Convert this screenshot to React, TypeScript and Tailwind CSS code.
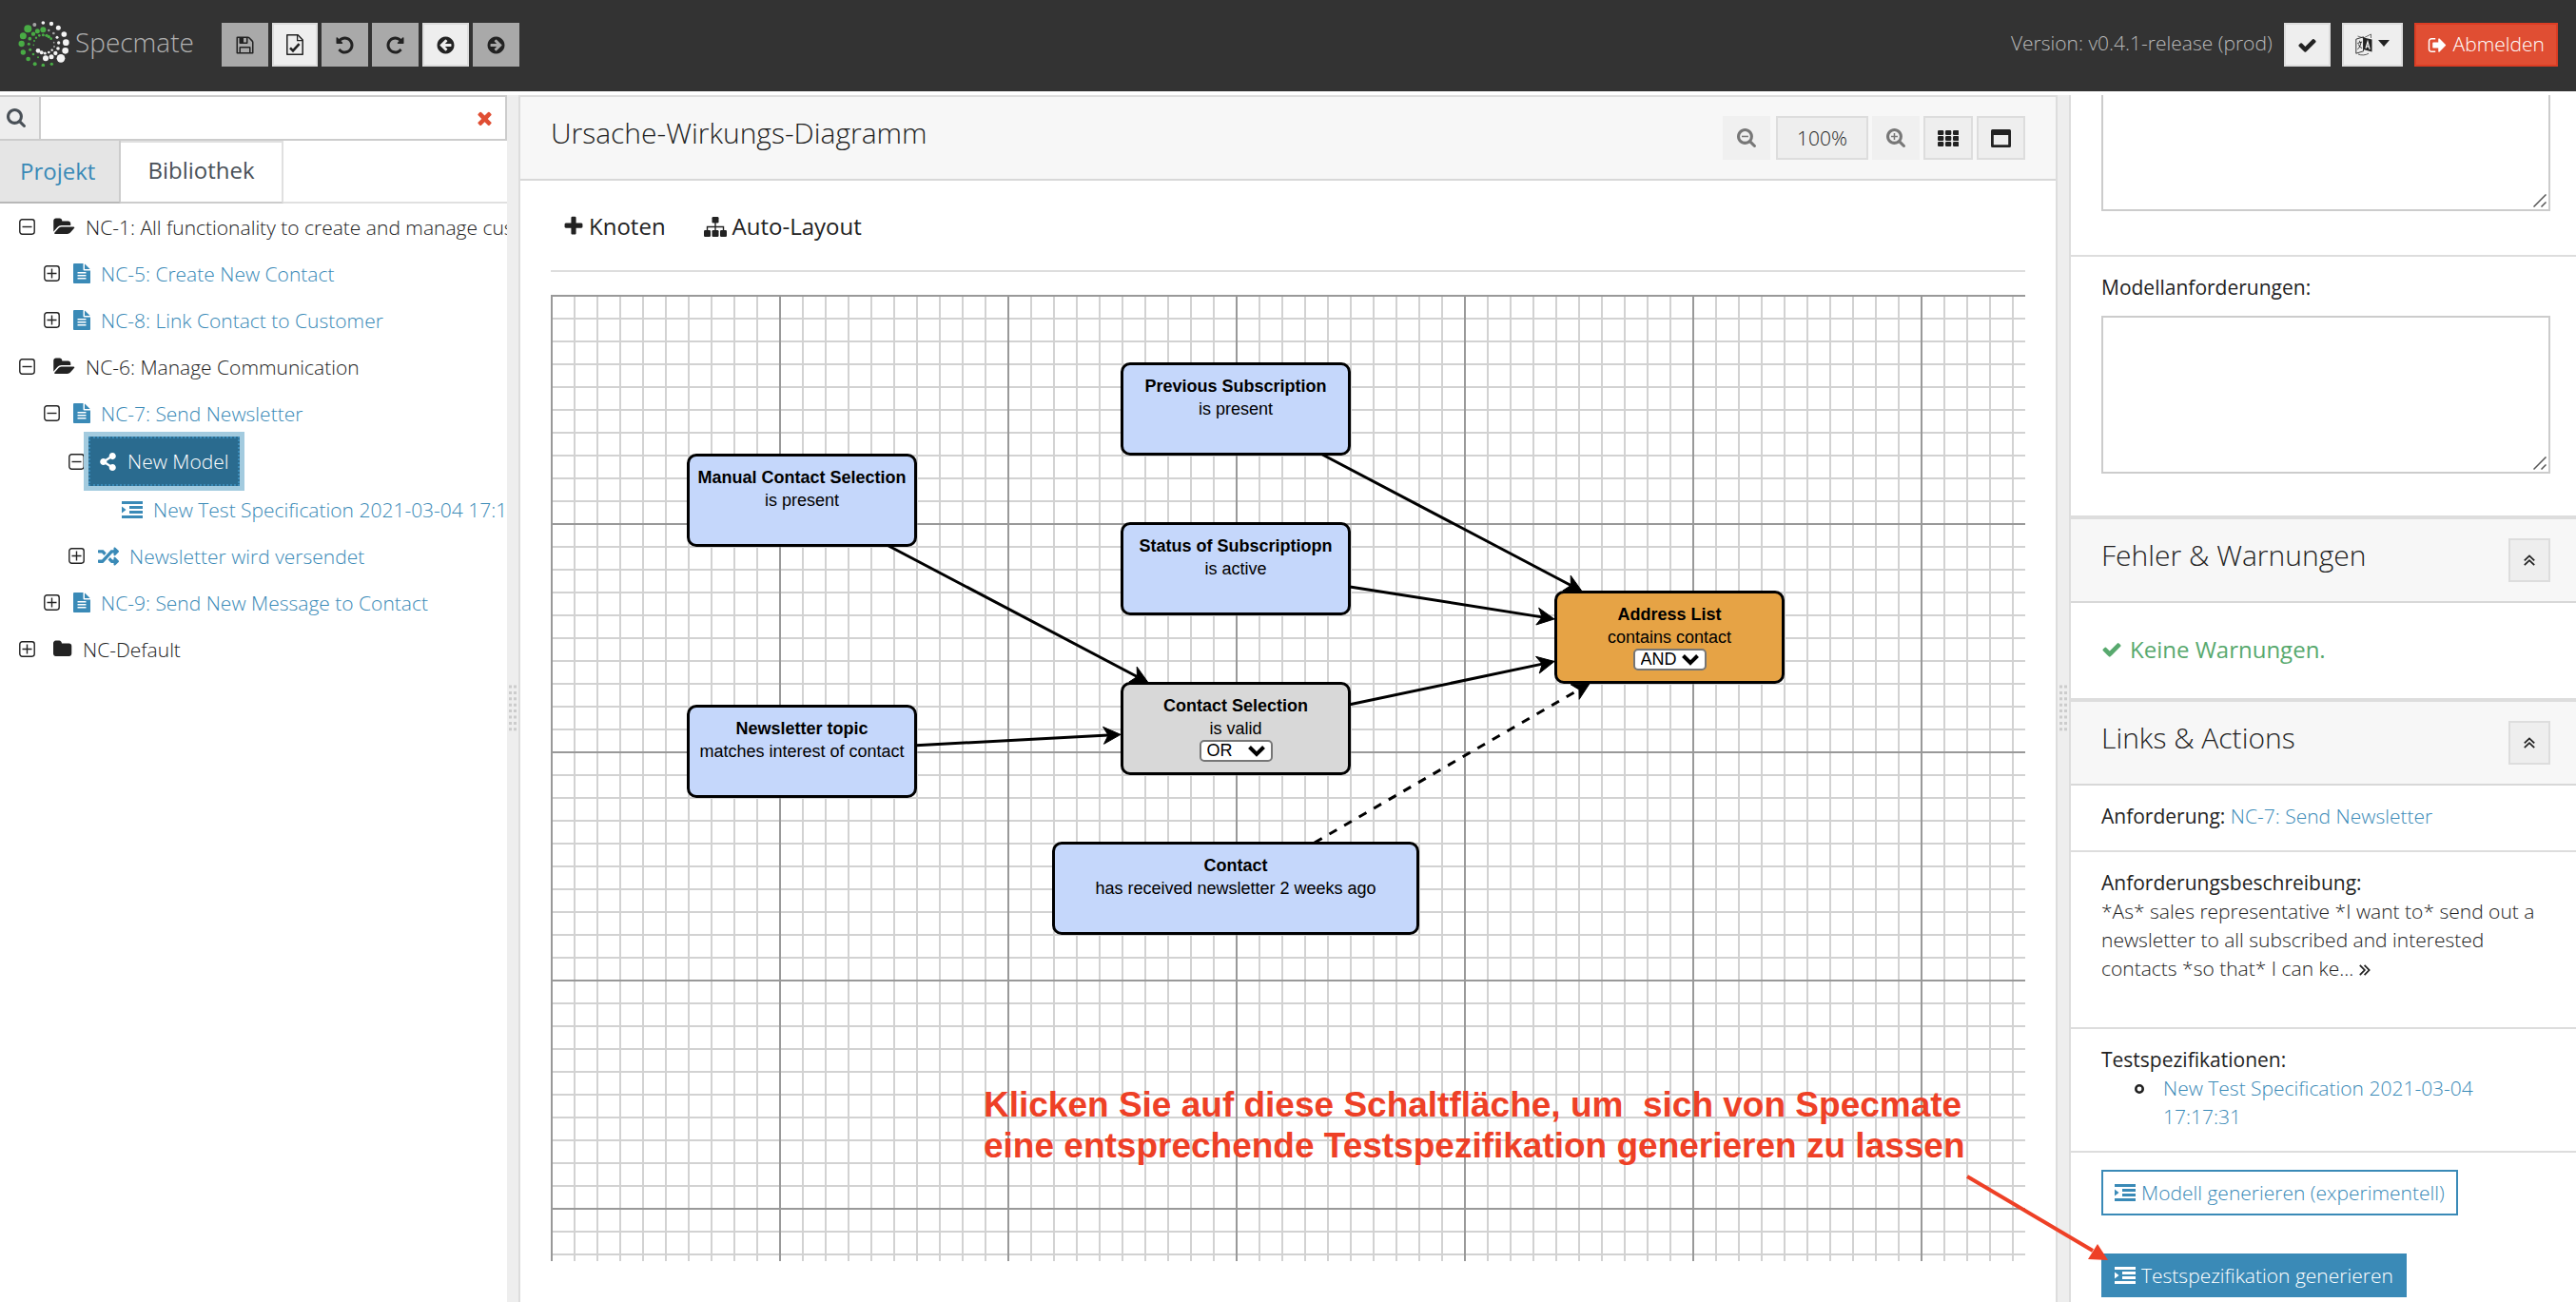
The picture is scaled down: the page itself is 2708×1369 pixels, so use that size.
import { useState } from 'react';
import type { ReactNode } from 'react';
import { FaRandom, FaShareAlt } from 'react-icons/fa';

/* ---------- Icons ---------- */

const paths = {
  save: 'M512 1536h768v-384h-768v384zm896 0h128v-896q0-14-10-38.5t-20-34.5l-281-281q-10-10-34-20t-39-10v416q0 40-28 68t-68 28h-576q-40 0-68-28t-28-68v-416h-128v1280h128v-416q0-40 28-68t68-28h832q40 0 68 28t28 68v416zm-384-928v-320q0-13-9.5-22.5t-22.5-9.5h-192q-13 0-22.5 9.5t-9.5 22.5v320q0 13 9.5 22.5t22.5 9.5h192q13 0 22.5-9.5t9.5-22.5zm640 32v928q0 40-28 68t-68 28h-1344q-40 0-68-28t-28-68v-1344q0-40 28-68t68-28h928q40 0 88 20t76 48l280 280q28 28 48 76t20 88z',
  undo: 'M1664 896q0 156-61 298t-164 245-245 164-298 61q-172 0-327-72.5t-264-204.5q-7-10-6.5-22.5t8.5-20.5l137-138q10-9 25-9 16 2 23 12 73 95 179 147t225 52q104 0 198.5-40.5t163.5-109.5 109.5-163.5 40.5-198.5-40.5-198.5-109.5-163.5-163.5-109.5-198.5-40.5q-98 0-188 35.5t-160 101.5l137 138q31 30 14 69-17 40-59 40h-448q-26 0-45-19t-19-45v-448q0-42 40-59 39-17 69 14l130 129q107-101 244.5-156.5t284.5-55.5q156 0 298 61t245 164 164 245 61 298z',
  back: 'M1408 960v-128q0-26-19-45t-45-19h-502l189-189q19-19 19-45t-19-45l-91-91q-18-18-45-18t-45 18l-362 362-91 91q-18 18-18 45t18 45l91 91 362 362q18 18 45 18t45-18l91-91q18-18 18-45t-18-45l-189-189h502q26 0 45-19t19-45zm256-64q0 209-103 385.5t-279.5 279.5-385.5 103-385.5-103-279.5-279.5-103-385.5 103-385.5 279.5-279.5 385.5-103 385.5 103 279.5 279.5 103 385.5z',
  search: 'M1216 832q0-185-131.5-316.5t-316.5-131.5-316.5 131.5-131.5 316.5 131.5 316.5 316.5 131.5 316.5-131.5 131.5-316.5zm512 832q0 52-38 90t-90 38q-54 0-90-38l-343-342q-179 124-399 124-143 0-273.5-55.5t-225-150-150-225-55.5-273.5 55.5-273.5 150-225 225-150 273.5-55.5 273.5 55.5 225 150 150 225 55.5 273.5q0 220-124 399l343 343q37 37 37 90z',
  times: 'M1490 1322q0 40-28 68l-136 136q-28 28-68 28t-68-28l-294-294-294 294q-28 28-68 28t-68-28l-136-136q-28-28-28-68t28-68l294-294-294-294q-28-28-28-68t28-68l136-136q28-28 68-28t68 28l294 294 294-294q28-28 68-28t68 28l136 136q28 28 28 68t-28 68l-294 294 294 294q28 28 28 68z',
  check: 'M1671 566q0 40-28 68l-724 724-136 136q-28 28-68 28t-68-28l-136-136-362-362q-28-28-28-68t28-68l136-136q28-28 68-28t68 28l294 295 656-657q28-28 68-28t68 28l136 136q28 28 28 68z',
  plus: 'M1600 736v192q0 40-28 68t-68 28h-416v416q0 40-28 68t-68 28h-192q-40 0-68-28t-28-68v-416h-416q-40 0-68-28t-28-68v-192q0-40 28-68t68-28h416v-416q0-40 28-68t68-28h192q40 0 68 28t28 68v416h416q40 0 68 28t28 68z',
  signOut: 'M704 1440q0 4 1 20t.5 26.5-3 23.5-10 19.5-20.5 6.5h-320q-119 0-203.5-84.5t-84.5-203.5v-704q0-119 84.5-203.5t203.5-84.5h320q13 0 22.5 9.5t9.5 22.5q0 4 1 20t.5 26.5-3 23.5-10 19.5-20.5 6.5h-320q-66 0-113 47t-47 113v704q0 66 47 113t113 47h312l11.5 1 11.5 3 8 5.5 7 9 2 13.5zm928-544q0 26-19 45l-544 544q-19 19-45 19t-45-19-19-45v-288h-448q-26 0-45-19t-19-45v-384q0-26 19-45t45-19h448v-288q0-26 19-45t45-19 45 19l544 544q19 19 19 45z',
  folder: 'M1728 608v704q0 92-66 158t-158 66h-1216q-92 0-158-66t-66-158v-960q0-92 66-158t158-66h320q92 0 158 66t66 158v32h672q92 0 158 66t66 158z',
  folderOpen: 'M1879 952q0 31-31 66l-336 396q-43 51-120.5 86.5t-143.5 35.5h-1088q-34 0-60.5-13t-26.5-43q0-31 31-66l336-396q43-51 120.5-86.5t143.5-35.5h1088q34 0 60.5 13t26.5 43zm-343-344v160h-832q-94 0-197 47.5t-164 119.5l-337 396-5 6q0-4-.5-12.5t-.5-12.5v-960q0-92 66-158t158-66h320q92 0 158 66t66 158v32h544q92 0 158 66t66 158z',
  file: 'M1596 476q14 14 28 36h-472v-472q22 14 36 28zm-476 164h544v1056q0 40-28 68t-68 28h-1344q-40 0-68-28t-28-68v-1600q0-40 28-68t68-28h800v544q0 40 28 68t68 28zm160 736v-64q0-14-9-23t-23-9h-704q-14 0-23 9t-9 23v64q0 14 9 23t23 9h704q14 0 23-9t9-23zm0-256v-64q0-14-9-23t-23-9h-704q-14 0-23 9t-9 23v64q0 14 9 23t23 9h704q14 0 23-9t9-23zm0-256v-64q0-14-9-23t-23-9h-704q-14 0-23 9t-9 23v64q0 14 9 23t23 9h704q14 0 23-9t9-23z',
};

function Glyph({ name, className = '', box = '0 0 1792 1792' }: { name: keyof typeof paths; className?: string; box?: string }) {
  return (
    <svg aria-hidden="true" viewBox={box} fill="currentColor" className={`shrink-0 ${className}`}>
      <path d={paths[name]} />
    </svg>
  );
}

function FileCheckIcon() {
  return (
    <svg aria-hidden="true" viewBox="0 0 20 24" fill="none" stroke="currentColor" className="h-6 w-5">
      <path d="M1.8 1.8h11.4l5 5.2v15.2H1.8z" strokeWidth="1.5" strokeLinejoin="round" />
      <path d="M12.6 2v5.6h5.4" strokeWidth="1.3" />
      <path d="M5 15.4l3 3 6.600-7.200" strokeWidth="2.6" />
    </svg>
  );
}

function LanguageIcon() {
  return (
    <svg aria-hidden="true" viewBox="0 0 18 24" className="h-6 w-[18px]" fill="none" stroke="currentColor">
      <path d="M.8 6.200L8.500 3.800v15L.8 21.200z" strokeWidth="0.9" />
      <path d="M2.500 3l6 2 8-4v4" strokeWidth="0.8" opacity="0.8" />
      <path d="M8.500 4.500l9 2v13l-9-2.500z" fill="currentColor" stroke="none" />
      <path d="M11 15.800l2-7 2.200 8M11.600 13.600l3 .8" stroke="#ededed" strokeWidth="1.300" />
      <path d="M2.300 10.500l4.800-1.500M4.500 7.800l.4 1.800M6 9.500c-.6 3.500-2 6-3.600 7.400M3.300 11.500c.8 2 2 3.600 3.800 4" strokeWidth="0.9" />
      <path d="M3 22c3 1.400 8 1.200 11-.8" strokeWidth="0.9" opacity="0.8" />
    </svg>
  );
}

function ToggleIcon({ open }: { open: boolean }) {
  return (
    <svg aria-hidden="true" viewBox="0 0 17 17" className="size-[17px] shrink-0" fill="none" stroke="currentColor" strokeWidth="1.400">
      <rect x="0.8" y="0.8" width="15.400" height="15.400" rx="2.600" />
      <path d={open ? 'M3.500 8.500h10' : 'M3.500 8.500h10M8.500 3.500v10'} />
    </svg>
  );
}

function IndentIcon() {
  return (
    <svg aria-hidden="true" viewBox="0 0 22 18" fill="currentColor" className="h-[18px] w-[22px] shrink-0">
      <path d="M0 0h22v3H0zM8 5h14v3H8zM8 10h14v3H8zM0 15h22v3H0zM0 5.500L4.500 9 0 12.500z" />
    </svg>
  );
}

function ZoomIcon({ plus }: { plus?: boolean }) {
  return (
    <svg aria-hidden="true" viewBox="64 128 1664 1664" fill="currentColor" className="size-5 shrink-0">
      <path d={paths.search} />
      <path d={plus ? 'M480 768h576v128h-576zM704 544h128v576h-128z' : 'M480 768h576v128h-576z'} />
    </svg>
  );
}

function GridIcon() {
  return (
    <svg aria-hidden="true" viewBox="0 0 22 17" fill="currentColor" className="h-[17px] w-[22px]">
      {[0, 6, 12].map((y) => [0, 8, 16].map((x) => <rect key={`${x}-${y}`} x={x} y={y} width="6.300" height="5" rx="1.300" />))}
    </svg>
  );
}

function WindowIcon() {
  return (
    <svg aria-hidden="true" viewBox="0 0 21 19" fill="currentColor" className="h-[19px] w-[21px]">
      <path fillRule="evenodd" d="M1.500 0h18Q21 0 21 1.500v16Q21 19 19.500 19h-18Q0 19 0 17.500v-16Q0 0 1.500 0zM2.800 6v10.300h15.400V6z" />
    </svg>
  );
}

function SitemapIcon() {
  return (
    <svg aria-hidden="true" viewBox="0 0 24 21" fill="currentColor" className="h-[21px] w-6">
      <rect x="8.500" y="0" width="7" height="6.500" rx="1.200" />
      <rect x="0" y="14" width="7" height="7" rx="1.200" />
      <rect x="8.500" y="14" width="7" height="7" rx="1.200" />
      <rect x="17" y="14" width="7" height="7" rx="1.200" />
      <path d="M12 6v9M3.500 15v-4.500h17V15" fill="none" stroke="currentColor" strokeWidth="1.400" />
    </svg>
  );
}

function DoubleUpIcon() {
  return (
    <svg aria-hidden="true" viewBox="0 0 12 12" fill="none" stroke="currentColor" strokeWidth="1.800" className="size-3">
      <path d="M.8 6.400L6 1.400l5.200 5M.8 11.200L6 6.200l5.200 5" />
    </svg>
  );
}

const green: number[][] = [
  [56, 60, 12], [41, 82, 10.5], [36, 107, 9.5], [41, 134, 8], [57, 155, 7], [78, 171, 6], [104, 175, 5.5], [131, 171, 5],
  [104, 63, 9], [86, 67, 7.5], [73, 76, 6.5], [62, 91, 5.5], [59, 108, 4.5], [63, 126, 4.5], [73, 140, 4], [88, 150, 3],
  [82, 88, 3.5], [92, 81, 4], [104, 79, 4.5], [115, 81, 5], [122, 85, 5], [129, 91, 4], [76, 98, 3], [74, 111, 2.5],
];
const white: number[][] = [
  [104, 41, 5.5], [130, 44, 6.5], [152, 57, 7.5], [170, 77, 8.5], [176, 103, 10], [174, 129, 10], [160, 153, 13],
  [148, 87, 4.5], [153, 104, 5], [151, 122, 5.5], [143, 137, 6.5], [130, 148, 7.5], [112, 153, 9],
  [88, 129, 7], [99, 135, 6], [110, 137, 4.5], [122, 134, 4], [132, 127, 3.5],
];
const grey: number[][] = [[77, 47, 6], [122, 65, 3.5], [137, 74, 4], [139, 116, 3], [138, 103, 2.5]];

function Logo() {
  const dots = (list: number[][], className: string) =>
    list.map(([x, y, r]) => <circle key={`${x}-${y}`} cx={x} cy={y} r={r} className={className} />);
  return (
    <a href="#" className="flex items-center gap-1.5">
      <svg aria-hidden="true" viewBox="25 35 162 144" className="h-12 w-[54px]">
        {dots(green, 'fill-[#49ac45]')}
        {dots(white, 'fill-[#f4f4f4]')}
        {dots(grey, 'fill-[#a5a5a5]')}
      </svg>
      <span className="pb-1 text-[28px] leading-9 text-[#b0b0b0]">Specmate</span>
    </a>
  );
}

/* ---------- Header ---------- */

function HeaderButton({ label, active, children }: { label: string; active?: boolean; children: ReactNode }) {
  return (
    <button
      type="button"
      aria-label={label}
      disabled={!active}
      className={`flex h-[46px] min-w-12 items-center justify-center border-2 px-3 text-[#222] ${
        active ? 'border-[#ddd] bg-[#eee]' : 'border-[#a9a9a9] bg-[#a9a9a9]'
      }`}
    >
      {children}
    </button>
  );
}

function Header() {
  return (
    <header className="flex h-24 shrink-0 items-start bg-[#333] px-[19px]">
      <div className="flex h-[92px] items-center gap-[29px]">
        <Logo />
        <div className="flex items-center gap-1 pt-0.5">
          <HeaderButton label="Speichern"><Glyph name="save" className="size-[21px]" /></HeaderButton>
          <HeaderButton label="Prüfen" active><FileCheckIcon /></HeaderButton>
          <HeaderButton label="Rückgängig"><Glyph name="undo" className="size-[21px]" /></HeaderButton>
          <HeaderButton label="Wiederholen"><Glyph name="undo" className="size-[21px] -scale-x-100" /></HeaderButton>
          <HeaderButton label="Zurück" active><Glyph name="back" className="size-[21px]" /></HeaderButton>
          <HeaderButton label="Vorwärts"><Glyph name="back" className="size-[21px] -scale-x-100" /></HeaderButton>
        </div>
      </div>
      <div className="ml-auto flex items-center gap-3 pt-6">
        <span className="pb-1 text-[#b9b9b9]">Version: v0.4.1-release (prod)</span>
        <HeaderButton label="Status" active><Glyph name="check" className="size-[21px]" /></HeaderButton>
        <HeaderButton label="Sprache" active>
          <span className="flex items-center gap-1.5">
            <LanguageIcon />
            <svg aria-hidden="true" viewBox="0 0 12 7" className="-mt-1 h-[7px] w-3" fill="currentColor"><path d="M0 0h12L6 7z" /></svg>
          </span>
        </HeaderButton>
        <button type="button" className="flex h-[46px] items-center gap-1.5 border-2 border-[#dc3d24] bg-[#e04e33] px-3 font-normal text-white">
          <Glyph name="signOut" className="size-[21px]" />
          <span className="pb-0.5 font-light">Abmelden</span>
        </button>
      </div>
    </header>
  );
}

/* ---------- Project explorer ---------- */

type Row = { label: string; level: string; open?: boolean; icon: ReactNode; link?: boolean; selected?: boolean };

const rows: Row[] = [
  { label: 'NC-1: All functionality to create and manage customers', level: 'pl-5', open: true, icon: <Glyph name="folderOpen" box="0 0 1920 1792" className="h-[21px] w-[23px]" /> },
  { label: 'NC-5: Create New Contact', level: 'pl-[46px]', open: false, link: true, icon: <Glyph name="file" box="128 0 1536 1792" className="h-[21px] w-[18px]" /> },
  { label: 'NC-8: Link Contact to Customer', level: 'pl-[46px]', open: false, link: true, icon: <Glyph name="file" box="128 0 1536 1792" className="h-[21px] w-[18px]" /> },
  { label: 'NC-6: Manage Communication', level: 'pl-5', open: true, icon: <Glyph name="folderOpen" box="0 0 1920 1792" className="h-[21px] w-[23px]" /> },
  { label: 'NC-7: Send Newsletter', level: 'pl-[46px]', open: true, link: true, icon: <Glyph name="file" box="128 0 1536 1792" className="h-[21px] w-[18px]" /> },
  { label: 'New Model', level: 'pl-[72px]', open: true, selected: true, icon: <FaShareAlt className="size-[19px]" /> },
  { label: 'New Test Specification 2021-03-04 17:17:31', level: 'pl-32', link: true, icon: <IndentIcon /> },
  { label: 'Newsletter wird versendet', level: 'pl-[72px]', open: false, link: true, icon: <FaRandom className="size-[22px]" /> },
  { label: 'NC-9: Send New Message to Contact', level: 'pl-[46px]', open: false, link: true, icon: <Glyph name="file" box="128 0 1536 1792" className="h-[21px] w-[18px]" /> },
  { label: 'NC-Default', level: 'pl-5', open: false, icon: <Glyph name="folder" box="64 0 1728 1792" className="h-[21px] w-5" /> },
];

function TreeRow({ row }: { row: Row }) {
  return (
    <li className={`flex items-center ${row.level} ${row.selected ? 'h-[52px] gap-1' : row.link ? 'h-[49px] gap-3.5' : 'h-[49px] gap-[19px]'}`}>
      {row.open !== undefined && (
        <button type="button" aria-label={row.open ? 'Zuklappen' : 'Aufklappen'} aria-expanded={row.open}>
          <ToggleIcon open={row.open} />
        </button>
      )}
      {row.selected ? (
        <a href="#" className="flex h-full items-center gap-[11px] border-2 border-dotted border-[#3a8ab7] bg-[#2a6b8f] px-[9px] whitespace-nowrap text-white ring-5 ring-[#a3cbdf]">
          {row.icon}
          {row.label}
        </a>
      ) : (
        <a href="#" className={`flex items-center gap-[11px] whitespace-nowrap ${row.link ? 'text-[#3a8ab7]' : 'text-[#222]'}`}>
          {row.icon}
          {row.label}
        </a>
      )}
    </li>
  );
}

function Explorer() {
  return (
    <aside className="flex w-[533px] shrink-0 flex-col overflow-hidden">
      <div className="flex h-12 shrink-0 border-2 border-l-0 border-[#ccc]">
        <span className="flex w-[43px] items-center border-r-2 border-[#ccc] bg-[#eee] pl-[7px] text-[#495057]">
          <Glyph name="search" box="64 128 1664 1664" className="size-5" />
        </span>
        <input type="text" aria-label="Suche" className="min-w-0 flex-1 px-3 outline-none" />
        <button type="button" aria-label="Suche löschen" className="px-3.5 text-[#e04e33]">
          <Glyph name="times" box="302 302 1188 1252" className="size-[15px]" />
        </button>
      </div>
      <div role="tablist" className="flex h-[66px] shrink-0 border-b-2 border-[#e0e0e0] text-[24px] font-normal">
        <button type="button" role="tab" aria-selected="false" className="-mb-0.5 border-r-2 border-b-2 border-r-[#ccc] border-b-[#b8b8b8] bg-[#e5e5e5] pr-[25px] pl-[21px] text-[#3a8ab7]">Projekt</button>
        <button type="button" role="tab" aria-selected="true" className="-mb-0.5 border-2 border-l-0 border-[#e0e0e0] border-b-[#ccc] px-7 pb-1 text-[#495057]">Bibliothek</button>
      </div>
      <ul>
        {rows.map((row) => <TreeRow key={row.label} row={row} />)}
      </ul>
    </aside>
  );
}

function Splitter() {
  return (
    <div role="separator" className="flex w-3 shrink-0 items-center justify-center bg-[#eee]">
      <svg aria-hidden="true" viewBox="0 0 8 50" className="mt-5 h-[50px] w-2 fill-[#ccc]">
        {[0, 1, 2, 3, 4, 5, 6, 7].map((i) => (
          <path key={i} d={`M0 ${i * 6.4 + 0.500}h3v3h-3zM5 ${i * 6.4 + 0.500}h3v3h-3z`} />
        ))}
      </svg>
    </div>
  );
}

/* ---------- Cause-effect diagram ---------- */

type DiagramNode = { id: string; title: string; text: string; x: number; y: number; w: number; color: string; op?: string };

const nodes: DiagramNode[] = [
  { id: 'manual', title: 'Manual Contact Selection', text: 'is present', x: 144, y: 168, w: 240, color: 'bg-[#c5d7fb]' },
  { id: 'topic', title: 'Newsletter topic', text: 'matches interest of contact', x: 144, y: 432, w: 240, color: 'bg-[#c5d7fb]' },
  { id: 'previous', title: 'Previous Subscription', text: 'is present', x: 600, y: 72, w: 240, color: 'bg-[#c5d7fb]' },
  { id: 'status', title: 'Status of Subscriptiopn', text: 'is active', x: 600, y: 240, w: 240, color: 'bg-[#c5d7fb]' },
  { id: 'selection', title: 'Contact Selection', text: 'is valid', x: 600, y: 408, w: 240, color: 'bg-[#d8d8d8]', op: 'OR' },
  { id: 'address', title: 'Address List', text: 'contains contact', x: 1056, y: 312, w: 240, color: 'bg-[#e6a345]', op: 'AND' },
  { id: 'contact', title: 'Contact', text: 'has received newsletter 2 weeks ago', x: 528, y: 576, w: 384, color: 'bg-[#c5d7fb]' },
];

const edges = [
  { from: 'manual', to: 'selection' },
  { from: 'topic', to: 'selection' },
  { from: 'previous', to: 'address' },
  { from: 'status', to: 'address' },
  { from: 'selection', to: 'address' },
  { from: 'contact', to: 'address', dashed: true },
];

const NODE_HEIGHT = 96;

/** Point where the line from the centre of `a` towards the centre of `b` leaves `a`. */
function exitPoint(a: DiagramNode, b: DiagramNode) {
  const cx = a.x + a.w / 2;
  const cy = a.y + NODE_HEIGHT / 2;
  const dx = b.x + b.w / 2 - cx;
  const dy = b.y + NODE_HEIGHT / 2 - cy;
  const t = Math.min(a.w / 2 / Math.abs(dx || 1e-9), NODE_HEIGHT / 2 / Math.abs(dy || 1e-9));
  return { x: cx + dx * t, y: cy + dy * t };
}

function Edge({ from, to, dashed }: { from: string; to: string; dashed?: boolean }) {
  const a = nodes.find((n) => n.id === from)!;
  const b = nodes.find((n) => n.id === to)!;
  const start = exitPoint(a, b);
  const end = exitPoint(b, a);
  const length = Math.hypot(end.x - start.x, end.y - start.y);
  const ux = (end.x - start.x) / length;
  const uy = (end.y - start.y) / length;
  const at = (back: number, side: number) => `${end.x - ux * back - uy * side},${end.y - uy * back + ux * side}`;
  return (
    <g>
      <path d={`M${start.x},${start.y}L${at(14, 0)}`} fill="none" stroke="#000" strokeWidth="3" strokeDasharray={dashed ? '9 9' : undefined} />
      <path d={`M${at(1, 0)}L${at(19, 9)}L${at(14, 0)}L${at(19, -9)}Z`} stroke="#000" strokeWidth="1" />
    </g>
  );
}

function Diagram() {
  const [ops, setOps] = useState<Record<string, string>>({ selection: 'OR', address: 'AND' });
  return (
    <div className="relative flex-1 overflow-hidden font-[Liberation_Sans,Arial,sans-serif] text-black">
      <svg aria-hidden="true" className="absolute inset-0 size-full">
        <defs>
          <pattern id="minor" width="24" height="24" patternUnits="userSpaceOnUse">
            <path d="M0 1h24M1 0v24" stroke="#d2d2d2" strokeWidth="2" />
          </pattern>
          <pattern id="major" width="240" height="240" patternUnits="userSpaceOnUse">
            <path d="M0 1h240M1 0v240" stroke="#999" strokeWidth="2" />
          </pattern>
        </defs>
        <rect width="100%" height="100%" fill="url(#minor)" />
        <rect width="100%" height="100%" fill="url(#major)" />
        {edges.map((e) => <Edge key={`${e.from}-${e.to}`} {...e} />)}
      </svg>
      {nodes.map((n) => (
        <div
          key={n.id}
          className={`absolute flex h-[98px] flex-col items-center rounded-[10px] border-3 border-black pt-2.5 text-[18px] leading-6 whitespace-nowrap ${n.color}`}
          style={{ left: n.x - 1, top: n.y - 1, width: n.w + 2 }}
        >
          <div className="font-bold">{n.title}</div>
          <div className="font-normal">{n.text}</div>
          {n.op && (
            <div className="relative">
              <select
                aria-label={`Operator ${n.title}`}
                value={ops[n.id]}
                onChange={(e) => setOps({ ...ops, [n.id]: e.target.value })}
                className="block h-[23px] w-[77px] appearance-none rounded-[5px] border-2 border-[#767676] bg-white pl-1.5 text-[18px] leading-[19px] font-normal"
              >
                <option>AND</option>
                <option>OR</option>
              </select>
              <svg aria-hidden="true" viewBox="0 0 18 12" className="pointer-events-none absolute top-1.5 right-2 h-3 w-[18px]" fill="none" stroke="#000" strokeWidth="4">
                <path d="M1.500 1.500L9 9l7.500-7.500" />
              </svg>
            </div>
          )}
        </div>
      ))}
    </div>
  );
}

function Annotation() {
  return (
    <div className="pointer-events-none absolute right-[43px] bottom-[43px] w-[1182px] font-[Liberation_Sans,Arial,sans-serif] text-[37px] leading-[43px] font-bold text-[#ee4026]">
      <p className="whitespace-pre">{'Klicken Sie auf diese Schaltfläche, um  sich von Specmate\neine entsprechende Testspezifikation generieren zu lassen'}</p>
      <svg aria-hidden="true" viewBox="0 0 160 100" className="ml-auto h-[100px] w-40" fill="currentColor">
        <path d="M12 11l132 78" stroke="currentColor" strokeWidth="4" />
        <path d="M160 99l-11-17-10 16z" />
      </svg>
    </div>
  );
}

function ToolButton({ label, disabled, children }: { label: string; disabled?: boolean; children: ReactNode }) {
  return (
    <button
      type="button"
      aria-label={label}
      disabled={disabled}
      className={`flex h-[46px] items-center justify-center border-2 px-[13px] ${
        disabled ? 'border-[#f0f0f0] bg-[#f0f0f0] text-[#777]' : 'border-[#ddd] bg-[#eee] text-[#222]'
      }`}
    >
      {children}
    </button>
  );
}

function Editor() {
  return (
    <main className="flex min-w-0 flex-1 flex-col border-2 border-b-0 border-[#ddd]">
      <div className="flex items-start justify-between border-b-2 border-[#d8d8d8] bg-[#f7f7f7] px-8 py-5">
        <h1 className="text-[30px] leading-9">Ursache-Wirkungs-Diagramm</h1>
        <div className="flex gap-1">
          <ToolButton label="Verkleinern" disabled><ZoomIcon /></ToolButton>
          <button type="button" className="ml-0.5 h-[46px] border-2 border-[#ddd] bg-[#eee] px-5">100%</button>
          <ToolButton label="Vergrößern" disabled><ZoomIcon plus /></ToolButton>
          <ToolButton label="Raster"><GridIcon /></ToolButton>
          <ToolButton label="Vollbild"><WindowIcon /></ToolButton>
        </div>
      </div>
      <div className="flex flex-1 flex-col px-8 pb-[43px]">
        <div className="mb-6 flex h-24 shrink-0 items-center gap-10 border-b-2 border-[#ddd] pt-0.5 pl-3 text-[24px] font-normal">
          <button type="button" className="flex items-center gap-1">
            <Glyph name="plus" className="size-6" />
            Knoten
          </button>
          <button type="button" className="flex items-center gap-1.5">
            <SitemapIcon />
            Auto-Layout
          </button>
        </div>
        <Diagram />
      </div>
    </main>
  );
}

/* ---------- Properties ---------- */

function TextArea({ id, label, className }: { id: string; label: string; className: string }) {
  return (
    <div className="relative">
      <textarea id={id} aria-label={label} className={`block w-full resize-none border-2 border-[#ccc] p-2 outline-none ${className}`} />
      <svg aria-hidden="true" viewBox="0 0 14 14" className="absolute right-1 bottom-1 size-3.5" stroke="#555" strokeWidth="1.500">
        <path d="M.5 13.500l13-13M8.500 13.500l5-5" />
      </svg>
    </div>
  );
}

function SectionHeader({ title }: { title: string }) {
  return (
    <div className="flex items-start justify-between border-t-4 border-b-2 border-t-[#ddd] border-b-[#d8d8d8] bg-[#f7f7f7] py-5 pr-[27px] pl-8">
      <h2 className="text-[30px] leading-9">{title}</h2>
      <button type="button" aria-label={`${title} einklappen`} className="flex h-[46px] w-11 items-center justify-center border-2 border-[#ddd] bg-[#eee]">
        <DoubleUpIcon />
      </button>
    </div>
  );
}

function Properties() {
  return (
    <aside className="flex w-[533px] shrink-0 flex-col overflow-hidden border-l-2 border-[#ddd]">
      <div className="border-b-2 border-[#ddd] pr-[27px] pb-[46px] pl-8">
        <TextArea id="description" label="Beschreibung" className="h-[122px] border-t-0" />
      </div>
      <div className="pt-[17px] pr-[27px] pb-11 pl-8">
        <label htmlFor="requirements" className="mb-[15px] block font-normal">Modellanforderungen:</label>
        <TextArea id="requirements" label="Modellanforderungen" className="h-[166px]" />
      </div>

      <SectionHeader title="Fehler & Warnungen" />
      <div className="flex h-[100px] shrink-0 items-center gap-2 pb-0.5 pl-8 text-[24px] font-normal text-[#58a96e]">
        <Glyph name="check" className="size-[22px]" />
        Keine Warnungen.
      </div>

      <SectionHeader title="Links & Actions" />
      <div className="border-b-2 border-[#ddd] px-8 pt-[17px] pb-[21px]">
        <span className="font-normal">Anforderung:</span> <a href="#" className="text-[#3a8ab7]">NC-7: Send Newsletter</a>
      </div>
      <div className="border-b-2 border-[#ddd] pt-[17px] pr-[27px] pb-[47px] pl-8">
        <h3 className="font-normal">Anforderungsbeschreibung:</h3>
        <p>
          *As* sales representative *I want to* send out a newsletter to all subscribed and interested contacts *so that* I can ke...{' '}
          <button type="button" aria-label="Mehr anzeigen" className="inline-block rotate-90"><DoubleUpIcon /></button>
        </p>
      </div>
      <div className="border-b-2 border-[#ddd] px-8 pt-[17px] pb-[21px]">
        <h3 className="font-normal">Testspezifikationen:</h3>
        <ul>
          <li className="flex gap-5 pl-[35px]">
            <svg aria-hidden="true" viewBox="0 0 10 10" className="mt-[11px] size-2.5 shrink-0" fill="none" stroke="#222" strokeWidth="2.600"><circle cx="5" cy="5" r="3.700" /></svg>
            <a href="#" className="max-w-[340px] text-[#3a8ab7]">New Test Specification 2021-03-04 17:17:31</a>
          </li>
        </ul>
      </div>
      <div className="flex flex-col items-start gap-10 pt-[18px] pl-8">
        <button type="button" className="flex h-12 items-center gap-1.5 border-2 border-[#3a8ab7] px-3 text-[#3a8ab7]">
          <IndentIcon />
          Modell generieren (experimentell)
        </button>
        <button type="button" className="flex h-[46px] items-center gap-1.5 border-2 border-[#3a8ab7] bg-[#3a8ab7] px-3 text-white">
          <IndentIcon />
          Testspezifikation generieren
        </button>
      </div>
    </aside>
  );
}

export default function App() {
  return (
    <div className="flex h-screen flex-col overflow-hidden bg-white font-['Open_Sans',sans-serif] text-[21px] leading-[30px] font-light text-[#222]">
      <Header />
      <div className="flex min-h-0 flex-1 pt-1">
        <Explorer />
        <Splitter />
        <Editor />
        <Splitter />
        <Properties />
      </div>
      <div className="relative">
        <div className="absolute right-[449px] bottom-0">
          <Annotation />
        </div>
      </div>
    </div>
  );
}
